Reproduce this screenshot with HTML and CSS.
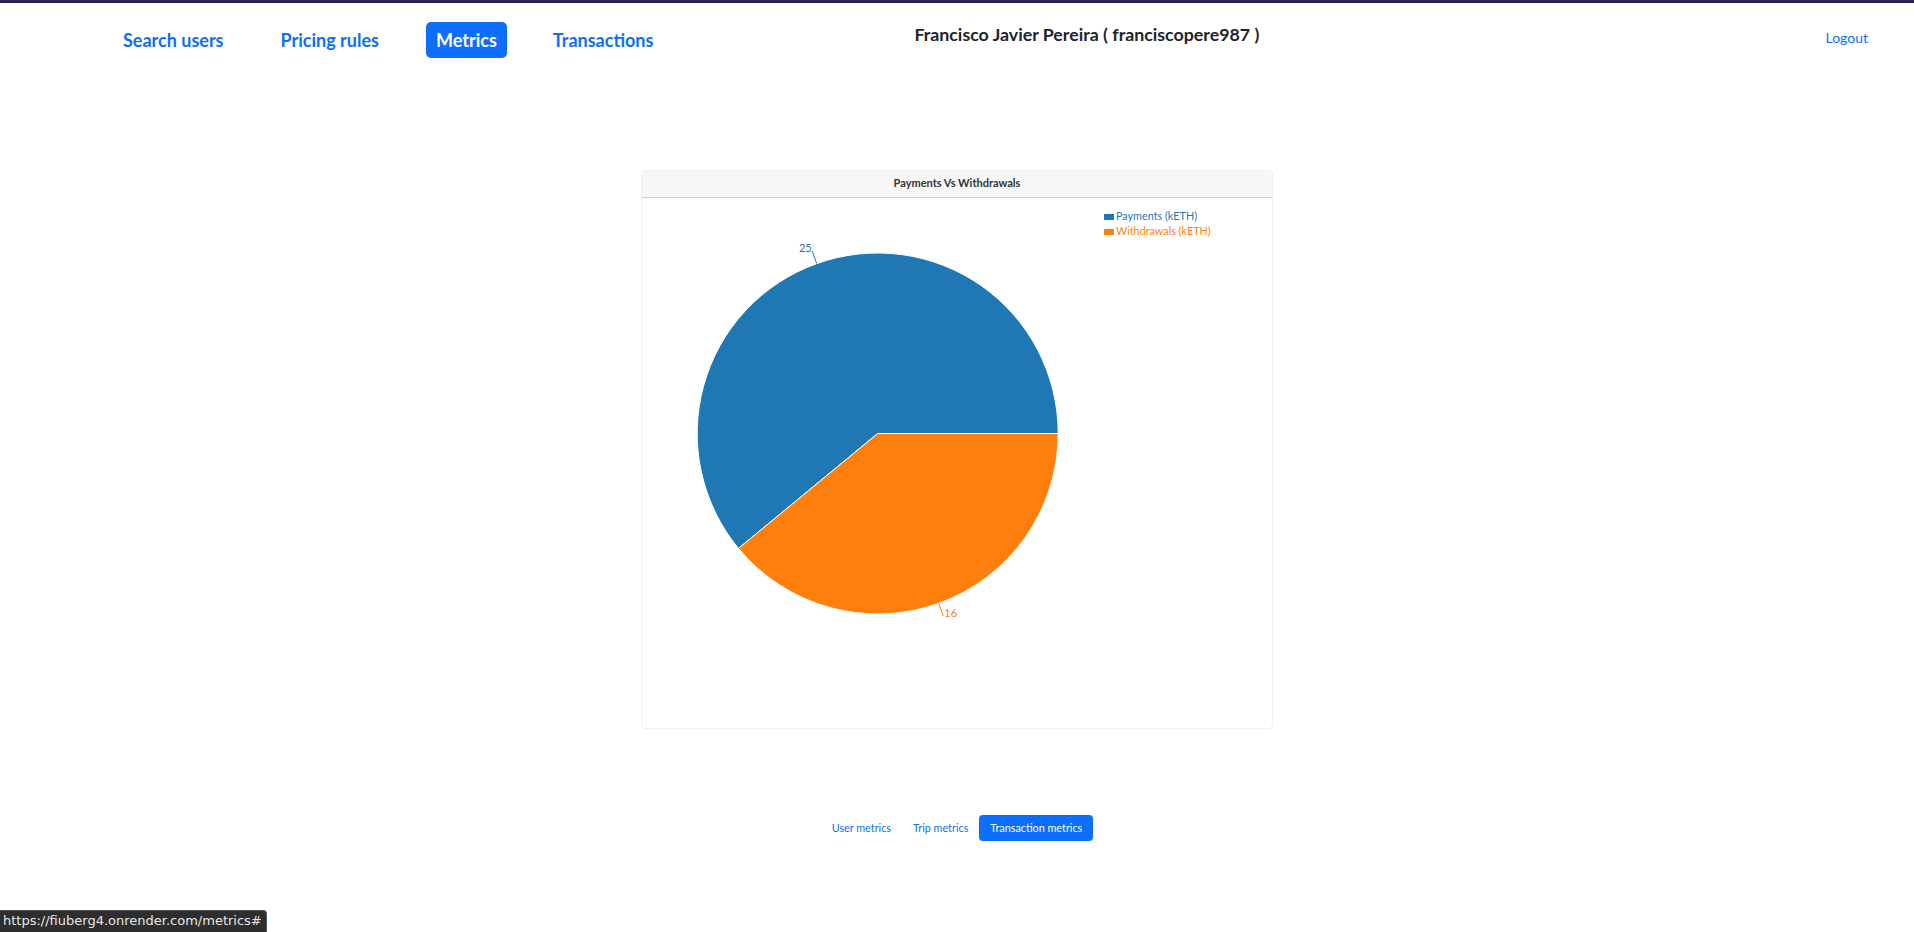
FILE: index.html
```html
<!DOCTYPE html>
<html lang="en">
<head>
    <meta charset="UTF-8">
    <meta name="viewport" content="width=device-width, initial-scale=1.0">
    <title>Metrics</title>
    <link rel="stylesheet" href="styles.css">
</head>
<body>

    <header class="topbar">
        <nav class="main-nav">
            <a href="#" class="nav-link">Search users</a>
            <a href="#" class="nav-link">Pricing rules</a>
            <a href="#" class="nav-link active">Metrics</a>
            <a href="#" class="nav-link">Transactions</a>
        </nav>
        <div class="user-name">Francisco Javier Pereira ( franciscopere987 )</div>
        <a href="#" class="logout">Logout</a>
    </header>

    <main class="content">
        <section class="chart-card">
            <div class="chart-header">Payments Vs Withdrawals</div>
            <div class="chart-body">
                <svg width="630" height="531" viewBox="0 0 630 531">
                    <g transform="translate(235.7 235.5)">
                        <path class="slice payments" d="M0,0 L-139.2,114.9 A180.5,180.5 0 1,1 180.5,0 Z"/>
                        <path class="slice withdrawals" d="M0,0 L180.5,0 A180.5,180.5 0 0,1 -139.2,114.9 Z"/>
                        <line class="leader payments" x1="-61" y1="-169.9" x2="-65.6" y2="-182.6"/>
                        <text class="value payments" x="-66" y="-182" text-anchor="end">25</text>
                        <line class="leader withdrawals" x1="61" y1="169.9" x2="65.6" y2="182.6"/>
                        <text class="value withdrawals" x="66.6" y="183.5">16</text>
                    </g>
                    <g class="legend" transform="translate(462 15)">
                        <rect class="payments" x="0" y="1" width="10" height="6"/>
                        <text class="payments" x="12" y="7">Payments (kETH)</text>
                        <rect class="withdrawals" x="0" y="16" width="10" height="6"/>
                        <text class="withdrawals" x="12" y="22">Withdrawals (kETH)</text>
                    </g>
                </svg>
            </div>
        </section>

        <div class="metric-tabs">
            <a href="#" class="tab">User metrics</a>
            <a href="#" class="tab">Trip metrics</a>
            <a href="#" class="tab active">Transaction metrics</a>
        </div>
    </main>

    <div class="status-url">https://fiuberg4.onrender.com/metrics#</div>

</body>
</html>
```

FILE: styles.css
```css
body {
    margin: 0;
    font-family: Lato, "Noto Sans", sans-serif;
    background-color: #fff;
    color: #212529;
    border-top: 3px solid #2b2050;
}
/* Top navigation */
.topbar {
    display: flex;
    align-items: flex-start;
    padding: 19px 46px 0 112px;
}
.main-nav {
    display: flex;
    gap: 35px;
}
.nav-link {
    display: block;
    padding: 7px 11px;
    font-size: 18px;
    line-height: 22px;
    font-weight: 700;
    color: #0d6efd;
    text-decoration: none;
    border-radius: 5px;
}
.nav-link.active {
    margin-left: 1px;
    padding: 7px 10px;
    background-color: #0d6efd;
    color: #fff;
}
.user-name {
    margin-left: 250px;
    padding-top: 2px;
    font-size: 17.8px;
    line-height: 21px;
    font-weight: 700;
}
.logout {
    margin-left: auto;
    padding-top: 7px;
    font-size: 14px;
    line-height: 17px;
    color: #0d6efd;
    text-decoration: none;
}
/* Chart card */
.content {
    display: flex;
    flex-direction: column;
    align-items: center;
    padding-top: 112px;
}
.chart-card {
    box-sizing: border-box;
    width: 632px;
    height: 559px;
    border: 1px solid #f0f0f0;
    border-radius: 4px;
    overflow: hidden;
}
.chart-header {
    height: 26px;
    line-height: 24px;
    background-color: #f7f7f7;
    border-bottom: 1px solid #cfcfcf;
    text-align: center;
    font-size: 11px;
    font-weight: 700;
    color: #333;
}
.chart-body svg {
    display: block;
}
.slice {
    stroke: #fff;
    stroke-width: 1;
}
.slice.payments { fill: #1f77b4; }
.slice.withdrawals { fill: #ff7f0e; }
.leader { stroke-width: 1; }
.leader.payments { stroke: #1f77b4; }
.leader.withdrawals { stroke: #ff7f0e; }
.value {
    font-size: 11px;
}
text.payments { fill: #1f77b4; }
text.withdrawals { fill: #ff7f0e; }
rect.payments { fill: #1f77b4; }
rect.withdrawals { fill: #ff7f0e; }
.legend text {
    font-size: 10.8px;
}
/* Metric switcher */
.metric-tabs {
    display: flex;
    margin-top: 86px;
}
.tab {
    display: block;
    padding: 0 11px;
    height: 26px;
    line-height: 26px;
    font-size: 10.8px;
    color: #0d6efd;
    text-decoration: none;
    border-radius: 4px;
}
.tab.active {
    background-color: #0d6efd;
    color: #fff;
}
/* Browser link preview */
.status-url {
    position: fixed;
    left: 0;
    bottom: 0;
    height: 21px;
    line-height: 20px;
    padding: 0 4px 0 3px;
    background-color: #2e2e2e;
    border: 1px solid #555;
    border-left: none;
    border-bottom: none;
    border-top-right-radius: 4px;
    font-family: "DejaVu Sans", sans-serif;
    font-size: 13px;
    color: #e6e6e6;
}
```
